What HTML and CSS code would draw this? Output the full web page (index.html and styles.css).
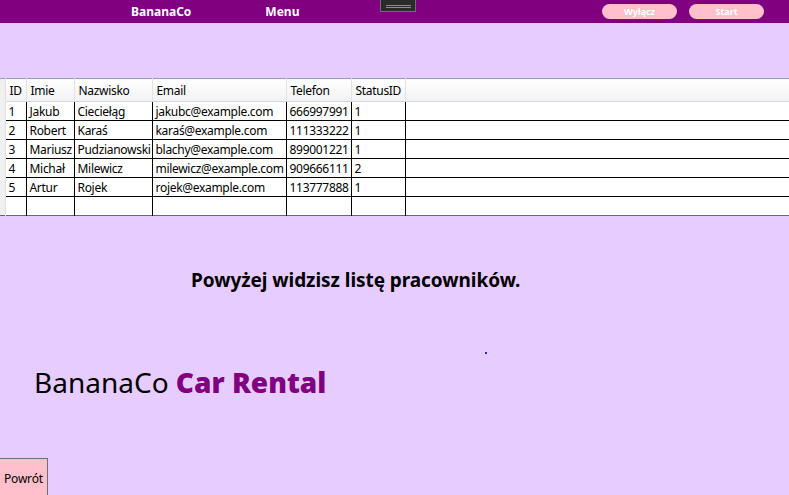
FILE: index.html
```html
<!DOCTYPE html>
<html lang="pl">
<head>
<meta charset="utf-8">
<link rel="stylesheet" href="styles.css">
</head>
<body>
<div class="page">
  <header class="topbar">
    <span class="brand-top">BananaCo</span>
    <span class="menu-top">Menu</span>
    <div class="grip"><span></span><span></span></div>
    <div class="actions">
      <button class="pill">Wyłącz</button>
      <button class="pill">Start</button>
    </div>
  </header>

  <table class="grid">
    <colgroup>
      <col class="c-rh"><col class="c-id"><col class="c-imie"><col class="c-naz"><col class="c-email"><col class="c-tel"><col class="c-st"><col>
    </colgroup>
    <thead>
      <tr><th class="rh"></th><th>ID</th><th>Imie</th><th>Nazwisko</th><th>Email</th><th>Telefon</th><th>StatusID</th><th class="fill"></th></tr>
    </thead>
    <tbody>
      <tr><td class="rh"></td><td>1</td><td>Jakub</td><td>Cieciełąg</td><td>jakubc@example.com</td><td>666997991</td><td>1</td><td></td></tr>
      <tr><td class="rh"></td><td>2</td><td>Robert</td><td>Karaś</td><td>karaś@example.com</td><td>111333222</td><td>1</td><td></td></tr>
      <tr><td class="rh"></td><td>3</td><td>Mariusz</td><td>Pudzianowski</td><td>blachy@example.com</td><td>899001221</td><td>1</td><td></td></tr>
      <tr><td class="rh"></td><td>4</td><td>Michał</td><td>Milewicz</td><td>milewicz@example.com</td><td>909666111</td><td>2</td><td></td></tr>
      <tr><td class="rh"></td><td>5</td><td>Artur</td><td>Rojek</td><td>rojek@example.com</td><td>113777888</td><td>1</td><td></td></tr>
      <tr class="empty"><td class="rh"></td><td></td><td></td><td></td><td></td><td></td><td></td><td></td></tr>
    </tbody>
  </table>

  <h2 class="info">Powyżej widzisz listę pracowników.</h2>
  <span class="dot"></span>

  <h1 class="logo">BananaCo <strong>Car Rental</strong></h1>

  <button class="back">Powrót</button>
</div>
</body>
</html>
```

FILE: styles.css
```css
* { box-sizing: border-box; }
html, body { margin: 0; padding: 0; }
body {
  background: #E6CCFF;
  font-family: "Noto Sans", "Open Sans", sans-serif;
  color: #000;
  width: 789px;
  height: 495px;
  overflow: hidden;
}
.page {
  position: relative;
  display: flex;
  flex-direction: column;
  height: 495px;
}
.topbar {
  position: relative;
  height: 23px;
  background: #800080;
  display: flex;
  align-items: center;
  color: #fff;
  font-weight: 700;
  font-size: 12px;
}
.brand-top { margin-left: 131px; }
.menu-top { margin-left: 74px; }
.grip {
  position: absolute;
  left: 380px;
  top: -1px;
  width: 36px;
  height: 13px;
  background: #2b2b2b;
  border: 1px solid #6e6e6e;
  display: flex;
  flex-direction: column;
  align-items: center;
  justify-content: center;
  gap: 1px;
  padding-top: 2px;
}
.grip span {
  display: block;
  width: 25px;
  height: 1px;
  background: #8d8d8d;
}
.actions {
  margin-left: auto;
  margin-right: 25px;
  display: flex;
  gap: 12px;
}
.pill {
  width: 75px;
  height: 15px;
  border: none;
  border-radius: 8px;
  background: #FFC0CB;
  color: #fff;
  font-family: inherit;
  font-weight: 700;
  font-size: 9px;
  line-height: 15px;
  padding: 0;
}

.grid {
  margin-top: 55px;
  width: 789px;
  border-collapse: collapse;
  table-layout: fixed;
  background: #fff;
  font-size: 12px;
  letter-spacing: -0.3px;
  border-top: 1px solid #8fa0b8;
  border-bottom: 1px solid #5c6a80;
}
.c-rh { width: 5px; }
.c-id { width: 21px; }
.c-imie { width: 48px; }
.c-naz { width: 78px; }
.c-email { width: 134px; }
.c-tel { width: 65px; }
.c-st { width: 54px; }
.grid th {
  height: 23px;
  font-weight: 400;
  text-align: left;
  padding: 0 0 0 4px;
  background: linear-gradient(#ffffff, #f1f2f4);
  border-right: 1px solid #e2e3e5;
  border-bottom: 1px solid #d5d5d5;
  white-space: nowrap;
  overflow: hidden;
}
.grid td {
  height: 19px;
  padding: 0 0 0 3px;
  border-right: 1px solid #000;
  border-bottom: 1px solid #000;
  white-space: nowrap;
  overflow: hidden;
  line-height: 17px;
}
.grid .rh {
  background: #f0f0f0;
  border-right: 1px solid #e0e0e0;
  border-bottom: 1px solid #f0f0f0;
  padding: 0;
}
.grid tr.empty td { height: 19px; border-bottom: none; }
.grid .fill { border-right: none; }
.grid td:last-child { border-right: none; }

.info {
  margin: 52px 0 0 191px;
  font-size: 19px;
  font-weight: 700;
  line-height: 24px;
  letter-spacing: -0.05px;
}
.dot {
  position: absolute;
  left: 485px;
  top: 352px;
  width: 2px;
  height: 2px;
  background: #2a2acc;
}
.logo {
  margin: 72px 0 0 34px;
  font-size: 28px;
  font-weight: 400;
  line-height: 36px;
}
.logo strong { color: #800080; font-weight: 900; }

.back {
  margin-top: auto;
  align-self: flex-start;
  width: 48px;
  height: 37px;
  background: #FFC0CB;
  border: 1px solid #707070;
  border-bottom: none;
  border-left: none;
  font-family: inherit;
  font-size: 12px;
  padding: 2px 0 0 4px;
  text-align: left;
  color: #000;
  letter-spacing: -0.2px;
}
```
